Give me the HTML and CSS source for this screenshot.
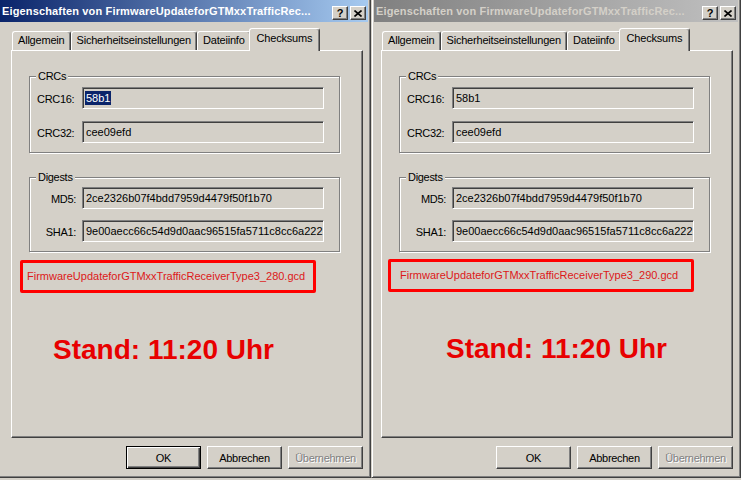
FILE: index.html
```html
<!DOCTYPE html>
<html>
	<head>
		<meta charset="utf-8">
		<title>Eigenschaften</title>
		<link rel="stylesheet" href="styles.css">
	</head>
	<body>
		<div class="desk">

			<!-- linkes Fenster (aktiv) -->
			<div class="win win-left">
				<div class="caption">
					<span class="caption-text">Eigenschaften von FirmwareUpdateforGTMxxTrafficRec...</span>
					<span class="cap-btn">?</span>
					<span class="cap-btn cap-close">
						<svg width="8" height="7" viewBox="0 0 8 7"><path d="M0.5 0.5 L7.5 6.5 M7.5 0.5 L0.5 6.5" stroke="#000" stroke-width="1.6" fill="none"/></svg>
					</span>
				</div>
				<div class="sheet">
					<div class="tabs">
						<span class="tab">Allgemein</span>
						<span class="tab">Sicherheitseinstellungen</span>
						<span class="tab">Dateiinfo</span>
						<span class="tab tab-on">Checksums</span>
					</div>
					<div class="panel">
						<div class="group">
							<span class="group-title">CRCs</span>
							<div class="fields">
								<label>CRC16:</label>
								<div class="edit"><span class="sel">58b1</span></div>
								<label>CRC32:</label>
								<div class="edit">cee09efd</div>
							</div>
						</div>
						<div class="group group-digest">
							<span class="group-title">Digests</span>
							<div class="fields fields-right">
								<label>MD5:</label>
								<div class="edit">2ce2326b07f4bdd7959d4479f50f1b70</div>
								<label>SHA1:</label>
								<div class="edit">9e00aecc66c54d9d0aac96515fa5711c8cc6a222</div>
							</div>
						</div>
						<div class="mark mark-left">FirmwareUpdateforGTMxxTrafficReceiverType3_280.gcd</div>
						<div class="stand stand-left">Stand: 11:20 Uhr</div>
					</div>
					<div class="buttons">
						<span class="btn btn-default">OK</span>
						<span class="btn">Abbrechen</span>
						<span class="btn btn-off">Übernehmen</span>
					</div>
				</div>
			</div>

			<!-- rechtes Fenster (inaktiv) -->
			<div class="win win-right">
				<div class="caption caption-off">
					<span class="caption-text">Eigenschaften von FirmwareUpdateforGTMxxTrafficRec...</span>
					<span class="cap-btn">?</span>
					<span class="cap-btn cap-close">
						<svg width="8" height="7" viewBox="0 0 8 7"><path d="M0.5 0.5 L7.5 6.5 M7.5 0.5 L0.5 6.5" stroke="#000" stroke-width="1.6" fill="none"/></svg>
					</span>
				</div>
				<div class="sheet">
					<div class="tabs">
						<span class="tab">Allgemein</span>
						<span class="tab">Sicherheitseinstellungen</span>
						<span class="tab">Dateiinfo</span>
						<span class="tab tab-on">Checksums</span>
					</div>
					<div class="panel">
						<div class="group">
							<span class="group-title">CRCs</span>
							<div class="fields">
								<label>CRC16:</label>
								<div class="edit">58b1</div>
								<label>CRC32:</label>
								<div class="edit">cee09efd</div>
							</div>
						</div>
						<div class="group group-digest">
							<span class="group-title">Digests</span>
							<div class="fields fields-right">
								<label>MD5:</label>
								<div class="edit">2ce2326b07f4bdd7959d4479f50f1b70</div>
								<label>SHA1:</label>
								<div class="edit">9e00aecc66c54d9d0aac96515fa5711c8cc6a222</div>
							</div>
						</div>
						<div class="mark mark-right">FirmwareUpdateforGTMxxTrafficReceiverType3_290.gcd</div>
						<div class="stand stand-right">Stand: 11:20 Uhr</div>
					</div>
					<div class="buttons">
						<span class="btn">OK</span>
						<span class="btn">Abbrechen</span>
						<span class="btn btn-off">Übernehmen</span>
					</div>
				</div>
			</div>

		</div>
	</body>
</html>
```

FILE: styles.css
```css
body{
	margin:0;
	width:741px;
	height:480px;
	overflow:hidden;
	background:#d4d0c8;
	font-family:"Liberation Sans", Arial, sans-serif;
	font-size:11px;
	color:#000;
}

.desk{
	display:flex;
	margin-top:-3px;
}

/* Fensterrahmen, klassisch 3D */
.win{
	box-sizing:border-box;
	height:481px;
	padding:2px;
	border:1px solid;
	border-color:#d4d0c8 #404040 #404040 #d4d0c8;
	box-shadow:inset 1px 1px #fff, inset -1px -1px #808080;
	display:flex;
	flex-direction:column;
	flex-shrink:0;
}

.win-left{
	width:374px;
	margin-left:-3px;
}

.win-right{
	width:370px;
}

.caption{
	height:22px;
	display:flex;
	align-items:flex-end;
	padding:0 2px 2px 2px;
	box-sizing:border-box;
	background:linear-gradient(to right, #0a246a, #a6caf0);
	color:#fff;
	font-weight:bold;
}

.caption-off{
	background:linear-gradient(to right, #808080, #c0c0c0);
	color:#d4d0c8;
}

.caption-text{
	flex:1;
	align-self:center;
	padding-top:2px;
	letter-spacing:0.15px;
	white-space:nowrap;
	overflow:hidden;
}

.cap-btn{
	box-sizing:border-box;
	width:16px;
	height:14px;
	margin-left:2px;
	background:#d4d0c8;
	border:1px solid;
	border-color:#fff #404040 #404040 #fff;
	box-shadow:inset -1px -1px #808080;
	color:#000;
	font-size:11px;
	line-height:12px;
	text-align:center;
	display:flex;
	align-items:center;
	justify-content:center;
}

.sheet{
	width:352px;
	margin:6px 5px 0 auto;
}

/* Reiter */
.tabs{
	display:flex;
	align-items:flex-end;
	height:22px;
	padding-left:1px;
}

.tab{
	box-sizing:border-box;
	height:19px;
	padding:0 5px;
	line-height:17px;
	border:1px solid;
	border-bottom:0;
	border-color:#fff #404040 transparent #fff;
	border-radius:3px 3px 0 0;
	box-shadow:inset -1px 0 #808080;
	letter-spacing:-0.2px;
	white-space:nowrap;
}

.tab-on{
	position:relative;
	z-index:1;
	height:23px;
	margin:0 -2px -1px -2px;
	padding:0 7px;
	line-height:18px;
	background:#d4d0c8;
}

.panel{
	box-sizing:border-box;
	height:388px;
	padding-top:25px;
	border:1px solid;
	border-color:#fff #404040 #404040 #fff;
	box-shadow:inset -1px -1px #808080;
}

/* Gruppenrahmen */
.group{
	position:relative;
	box-sizing:border-box;
	width:311px;
	margin-left:17px;
	padding:10px 0 9px 7px;
	border:1px solid #808080;
	box-shadow:inset 1px 1px #fff, 1px 1px #fff;
}

.group-digest{
	margin-top:24px;
	padding-top:9px;
}

.group-title{
	position:absolute;
	top:-7px;
	left:6px;
	padding:0 2px;
	line-height:13px;
	background:#d4d0c8;
	letter-spacing:-0.3px;
}

.fields{
	display:grid;
	grid-template-columns:45px 242px;
	grid-auto-rows:22px;
	row-gap:12px;
	align-items:center;
}

.fields label{
	letter-spacing:-0.3px;
	padding-top:2px;
}

.fields-right{
	row-gap:11px;
}

.fields-right label{
	text-align:right;
	padding-right:6px;
}

.edit{
	box-sizing:border-box;
	height:22px;
	padding:0 3px;
	border:1px solid;
	border-color:#808080 #fff #fff #808080;
	box-shadow:inset 1px 1px #404040, inset -1px -1px #d4d0c8;
	line-height:20px;
	white-space:nowrap;
	overflow:hidden;
}

.sel{
	background:#0a246a;
	color:#fff;
	padding:1px 1px;
	margin-left:-1px;
}

/* rote Markierung */
.mark{
	box-sizing:border-box;
	height:33px;
	margin-top:8px;
	border:3px solid #f00;
	border-radius:2px;
	line-height:27px;
	color:#dd1818;
	white-space:nowrap;
}

.mark-left{
	width:296px;
	margin-left:8px;
	padding-left:4px;
}

.mark-right{
	width:306px;
	margin-top:7px;
	margin-left:6px;
	padding-left:9px;
}

.stand{
	margin-top:41px;
	font-size:28px;
	font-weight:bold;
	line-height:32px;
	color:#e80000;
}

.stand-left{
	margin-left:41px;
}

.stand-right{
	margin-left:64px;
}

/* Schaltflaechen */
.buttons{
	display:flex;
	justify-content:flex-end;
	gap:6px;
	margin-top:8px;
}

.btn{
	box-sizing:border-box;
	width:75px;
	height:23px;
	border:1px solid;
	border-color:#fff #404040 #404040 #fff;
	box-shadow:inset -1px -1px #808080;
	display:flex;
	align-items:center;
	justify-content:center;
	letter-spacing:-0.3px;
}

.btn-default{
	border-color:#000;
	box-shadow:inset 1px 1px #fff, inset -1px -1px #404040, inset -2px -2px #808080;
}

.btn-off{
	color:#808080;
	text-shadow:1px 1px 0 #fff;
}
```
